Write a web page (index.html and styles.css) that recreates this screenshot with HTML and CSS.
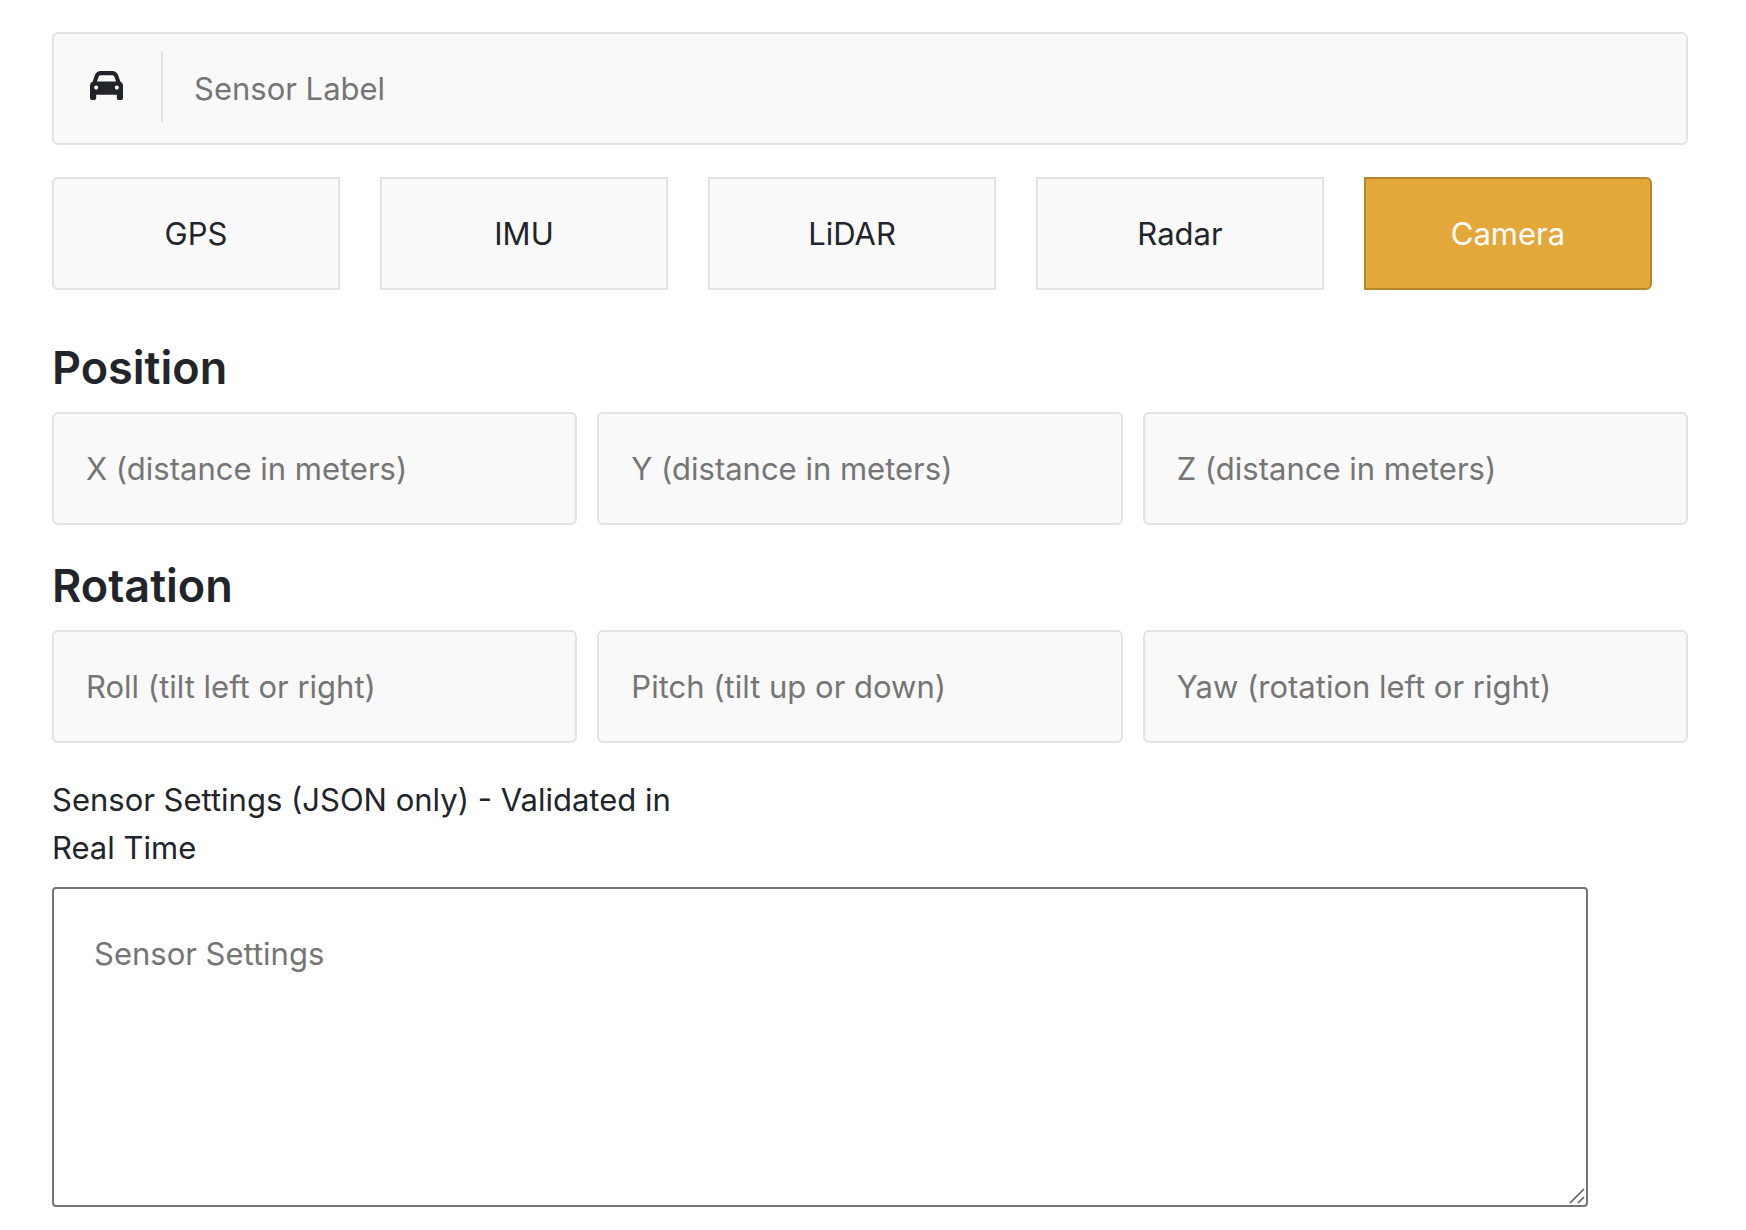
FILE: index.html
```html
<!DOCTYPE html>
<html lang="en">
<head>
    <meta charset="UTF-8">
    <meta name="viewport" content="width=device-width, initial-scale=1.0">
    <title>Sensor Setup</title>
    <link rel="stylesheet" href="styles.css">
</head>
<body>
    <form class="sensor-form">
        <div class="label-field">
            <svg class="car-icon" viewBox="0 0 512 512" aria-hidden="true">
                <path fill="currentColor" d="M135.2 117.4L109.1 192H402.9l-26.1-74.6C372.3 104.6 360.2 96 346.6 96H165.4c-13.6 0-25.7 8.6-30.2 21.4zM39.6 196.8L74.8 96.3C88.3 57.8 124.6 32 165.4 32H346.6c40.8 0 77.1 25.8 90.6 64.3l35.2 100.5c23.2 9.6 39.6 32.5 39.6 59.2V400v48c0 17.7-14.3 32-32 32H448c-17.7 0-32-14.3-32-32V400H96v48c0 17.7-14.3 32-32 32H32c-17.7 0-32-14.3-32-32V400 256c0-26.7 16.4-49.6 39.6-59.2zM128 288a32 32 0 1 0 -64 0 32 32 0 1 0 64 0zm288 32a32 32 0 1 0 0-64 32 32 0 1 0 0 64z"/>
            </svg>
            <input type="text" name="label" class="label-input" placeholder="Sensor Label" aria-label="Sensor Label">
        </div>

        <div class="sensor-types" role="group" aria-label="Sensor type">
            <button type="button" class="type-button">GPS</button>
            <button type="button" class="type-button">IMU</button>
            <button type="button" class="type-button">LiDAR</button>
            <button type="button" class="type-button">Radar</button>
            <button type="button" class="type-button active">Camera</button>
        </div>

        <h3>Position</h3>
        <div class="field-row">
            <input type="text" name="x" placeholder="X (distance in meters)" aria-label="X (distance in meters)">
            <input type="text" name="y" placeholder="Y (distance in meters)" aria-label="Y (distance in meters)">
            <input type="text" name="z" placeholder="Z (distance in meters)" aria-label="Z (distance in meters)">
        </div>

        <h3>Rotation</h3>
        <div class="field-row">
            <input type="text" name="roll" placeholder="Roll (tilt left or right)" aria-label="Roll (tilt left or right)">
            <input type="text" name="pitch" placeholder="Pitch (tilt up or down)" aria-label="Pitch (tilt up or down)">
            <input type="text" name="yaw" placeholder="Yaw (rotation left or right)" aria-label="Yaw (rotation left or right)">
        </div>

        <label class="settings-label" for="settings">Sensor Settings (JSON only) - Validated in Real Time</label>
        <div class="settings-box">
            <textarea id="settings" name="settings" rows="5" placeholder="Sensor Settings"></textarea>
            <svg class="resize-grip" viewBox="0 0 16 16" aria-hidden="true">
                <path d="M1 15L15 1M9 15L15 9" fill="none" stroke="#5c5c5f" stroke-width="1.6"/>
            </svg>
        </div>
    </form>
    <script>
        document.querySelectorAll('.type-button').forEach(function(button) {
            button.addEventListener('click', function() {
                document.querySelector('.type-button.active').classList.remove('active');
                button.classList.add('active');
            });
        });
    </script>
</body>
</html>
```
FILE: styles.css
```css
* {
    box-sizing: border-box;
}
body {
    margin: 0;
    background-color: #fff;
    color: #212529;
    font-family: Inter, "Liberation Sans", sans-serif;
    font-size: 31px;
}
.sensor-form {
    padding: 32px 58px 24px 52px;
}
input, textarea, button {
    font-family: inherit;
    font-size: inherit;
    line-height: 45px;
    color: inherit;
    margin: 0;
}
input::placeholder, textarea::placeholder {
    color: #757575;
    opacity: 1;
}
.label-field {
    display: flex;
    align-items: center;
    padding: 17px 0 17px 36px;
    background-color: #f9f9f9;
    border: 2px solid #e3e3e3;
    border-radius: 6px;
}
.car-icon {
    width: 33px;
    height: 33px;
    margin: 0 38px 6px 0;
    flex-shrink: 0;
}
.label-input {
    flex: 1;
    min-width: 0;
    height: 75px;
    padding: 0 33px;
    background: linear-gradient(#e3e3e3, #e3e3e3) left top / 2px 71px no-repeat;
    border: none;
}
.sensor-types {
    display: grid;
    grid-template-columns: repeat(5, 1fr);
    gap: 40px;
    margin-top: 32px;
    padding-right: 36px;
}
.type-button {
    padding: 32px 0;
    background-color: #f9f9f9;
    border: 2px solid #e3e3e3;
    cursor: pointer;
}
.type-button:first-child {
    border-radius: 6px 0 0 6px;
}
.type-button:last-child {
    border-radius: 0 6px 6px 0;
}
.type-button.active {
    background-color: #e4a83a;
    border-color: #b5862e;
    color: #fff;
}
h3 {
    margin: 50px 0 16px;
    font-size: 45px;
    font-weight: 600;
    line-height: 56px;
}
.field-row {
    display: grid;
    grid-template-columns: repeat(3, 1fr);
}
.field-row input {
    width: calc(100% - 20px);
    height: 113px;
    padding: 32px;
    background-color: #f9f9f9;
    border: 2px solid #e3e3e3;
    border-radius: 6px;
}
.field-row input:last-child {
    width: 100%;
}
.field-row + h3 {
    margin-top: 33px;
}
.settings-label {
    display: block;
    width: 40%;
    margin: 33px 0 15px;
    line-height: 48px;
}
.settings-box {
    position: relative;
    margin-right: 100px;
}
textarea {
    display: block;
    width: 100%;
    height: 320px;
    padding: 42px 40px;
    background-color: #fff;
    border: 2px solid #757575;
    border-radius: 4px;
    resize: vertical;
}
textarea::-webkit-resizer {
    display: none;
}
.resize-grip {
    position: absolute;
    right: 3px;
    bottom: 3px;
    width: 16px;
    height: 16px;
    pointer-events: none;
}
```
